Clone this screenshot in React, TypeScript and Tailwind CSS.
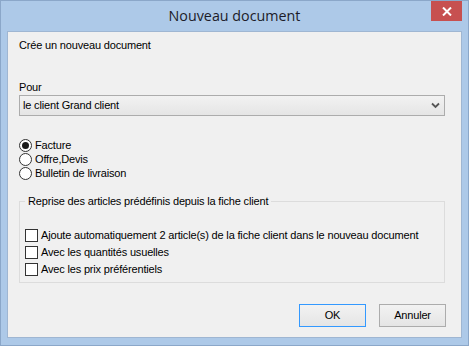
import React from "react";

const docTypes = ["Facture", "Offre,Devis", "Bulletin de livraison"];

const options = [
  "Ajoute automatiquement 2 article(s) de la fiche client dans le nouveau document",
  "Avec les quantités usuelles",
  "Avec les prix préférentiels",
];

function Radio({ checked }: { checked?: boolean }) {
  return (
    <span className="flex h-[13px] w-[13px] items-center justify-center rounded-full border border-[#333] bg-white">
      {checked && <span className="h-[7px] w-[7px] rounded-full bg-[#1a1a1a]" />}
    </span>
  );
}

export default function App() {
  return (
    <div className="h-[346px] w-[469px] border border-[#8ba7c9] bg-[#adc9e8] font-['Liberation_Sans',Arial,sans-serif] text-[11px] tracking-[-0.17px] text-black">
      {/* Title bar */}
      <div className="relative flex h-[30px] items-center justify-center">
        <span className="font-['Open_Sans',sans-serif] text-[14.3px] tracking-normal text-[#1c1c28]">Nouveau document</span>
        <button className="absolute right-[6px] top-0 flex h-[20px] w-[31px] items-center justify-center bg-[#c75050]">
          <svg width="10" height="9" viewBox="0 0 10 9">
            <path d="M1 0.5 L9 8.5 M9 0.5 L1 8.5" stroke="white" strokeWidth="2" />
          </svg>
        </button>
      </div>

      {/* Client area */}
      <div className="mx-[6px] flex h-[307px] flex-col border border-[#9fb6d2] bg-[#f0f0f0] pl-[11px] pt-[6px]">
        <div className="h-[14px] leading-[14px]">Crée un nouveau document</div>

        <div className="mt-[28px] h-[14px] leading-[14px]">Pour</div>
        <div className="mt-px flex h-[21px] w-[426px] items-center justify-between border border-[#acacac] bg-gradient-to-b from-[#f2f2f2] to-[#e5e5e5] pl-[3px] pr-[4px]">
          <span>le client Grand client</span>
          <svg width="9" height="7" viewBox="0 0 9 7">
            <path d="M1 1.5 L4.5 5 L8 1.5" fill="none" stroke="#555" strokeWidth="1.8" />
          </svg>
        </div>

        <div className="mt-[22px] flex flex-col">
          {docTypes.map((t, i) => (
            <label key={t} className="flex h-[14px] items-center gap-[3px] leading-[14px]">
              <Radio checked={i === 0} />
              <span>{t}</span>
            </label>
          ))}
        </div>

        <fieldset className="mt-[14px] h-[89px] w-[426px] border border-[#dcdcdc] px-[5px] pt-[19px]">
          <legend className="px-[3px] leading-[14px]">Reprise des articles prédéfinis depuis la fiche client</legend>
          <div className="flex flex-col gap-px">
            {options.map((o) => (
              <label key={o} className="flex h-4 items-center gap-[3px]">
                <span className="h-[13px] w-[13px] border border-[#333] bg-white" />
                <span>{o}</span>
              </label>
            ))}
          </div>
        </fieldset>

        <div className="mt-[21px] flex w-[426px] justify-end gap-[13px]">
          <button className="h-[23px] w-[67px] border border-[#3399ff] bg-gradient-to-b from-[#f2f2f2] to-[#e5e5e5] text-[11px]">
            OK
          </button>
          <button className="mr-[-1px] h-[23px] w-[67px] border border-[#acacac] bg-gradient-to-b from-[#f2f2f2] to-[#e5e5e5] text-[11px]">
            Annuler
          </button>
        </div>
      </div>
    </div>
  );
}
